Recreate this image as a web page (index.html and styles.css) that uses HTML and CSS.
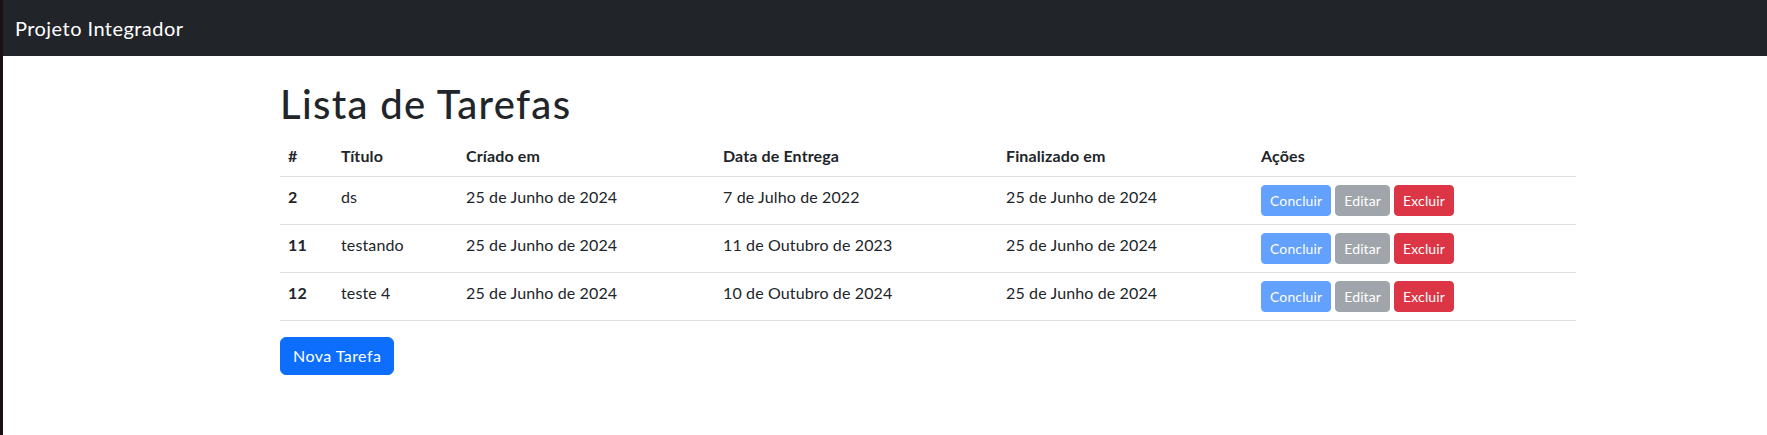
FILE: index.html
```html
<!DOCTYPE html>
<html lang="pt-BR">
<head>
<meta charset="utf-8">
<title>Projeto Integrador</title>
<link rel="stylesheet" href="styles.css">
</head>
<body>
<nav class="navbar">
  <span class="brand">Projeto Integrador</span>
</nav>
<main class="container">
  <h1 class="title">Lista de Tarefas</h1>
  <table class="table">
    <colgroup>
      <col class="c-id"><col class="c-title"><col class="c-created"><col class="c-due"><col class="c-done"><col class="c-actions">
    </colgroup>
    <thead>
      <tr><th>#</th><th>Título</th><th>Críado em</th><th>Data de Entrega</th><th>Finalizado em</th><th>Ações</th></tr>
    </thead>
    <tbody>
      <tr>
        <th>2</th><td>ds</td><td>25 de Junho de 2024</td><td>7 de Julho de 2022</td><td>25 de Junho de 2024</td>
        <td><div class="actions"><button class="btn btn-sm btn-primary-dis">Concluir</button><button class="btn btn-sm btn-secondary-dis">Editar</button><button class="btn btn-sm btn-danger">Excluir</button></div></td>
      </tr>
      <tr>
        <th>11</th><td>testando</td><td>25 de Junho de 2024</td><td>11 de Outubro de 2023</td><td>25 de Junho de 2024</td>
        <td><div class="actions"><button class="btn btn-sm btn-primary-dis">Concluir</button><button class="btn btn-sm btn-secondary-dis">Editar</button><button class="btn btn-sm btn-danger">Excluir</button></div></td>
      </tr>
      <tr>
        <th>12</th><td>teste 4</td><td>25 de Junho de 2024</td><td>10 de Outubro de 2024</td><td>25 de Junho de 2024</td>
        <td><div class="actions"><button class="btn btn-sm btn-primary-dis">Concluir</button><button class="btn btn-sm btn-secondary-dis">Editar</button><button class="btn btn-sm btn-danger">Excluir</button></div></td>
      </tr>
    </tbody>
  </table>
  <button class="btn btn-primary">Nova Tarefa</button>
</main>
</body>
</html>
```
FILE: styles.css
```css
* { box-sizing: border-box; }
html, body { margin: 0; padding: 0; }
body {
  font-family: "Lato", "Noto Sans", sans-serif;
  font-size: 16px;
  line-height: 1.5;
  letter-spacing: 0.028em;
  color: #212529;
  background: #fff;
  border-left: 3px solid #1b0f13;
  min-height: 435px;
}
.navbar {
  background: #212529;
  height: 56px;
  padding: 8px 12px;
  display: flex;
  align-items: center;
}
.brand {
  color: #fff;
  font-size: 20px;
  line-height: 30px;
  padding: 5px 0;
}
.container {
  width: 1296px;
  margin-left: 277px;
  padding-top: 24px;
}
.title {
  font-size: 40px;
  font-weight: 500;
  line-height: 1.2;
  margin: 0 0 8px;
  letter-spacing: 0.033em;
}
.table {
  width: 100%;
  border-collapse: collapse;
  table-layout: fixed;
  margin-bottom: 16px;
  letter-spacing: 0.008em;
}
.c-id { width: 53px; }
.c-title { width: 125px; }
.c-created { width: 257px; }
.c-due { width: 283px; }
.c-done { width: 255px; }
.c-actions { width: 323px; }
.table th, .table td {
  text-align: left;
  vertical-align: top;
  padding: 8px;
  border-bottom: 1px solid #dee2e6;
}
.table th { font-weight: 700; }
.actions { display: flex; gap: 4px; }
.btn {
  font-family: inherit;
  letter-spacing: inherit;
  border: 1px solid transparent;
  border-radius: 6px;
  color: #fff;
  font-size: 16px;
  line-height: 24px;
  padding: 6px 12px;
  cursor: pointer;
}
.btn-sm {
  font-size: 14px;
  line-height: 21px;
  padding: 4px 8px;
  border-radius: 4px;
}
.btn-primary { background: #0d6efd; border-color: #0d6efd; }
.btn-primary-dis { background: #62a1fe; border-color: #62a1fe; }
.btn-secondary-dis { background: #9fa5aa; border-color: #9fa5aa; }
.btn-danger { background: #dc3545; border-color: #dc3545; }
```
